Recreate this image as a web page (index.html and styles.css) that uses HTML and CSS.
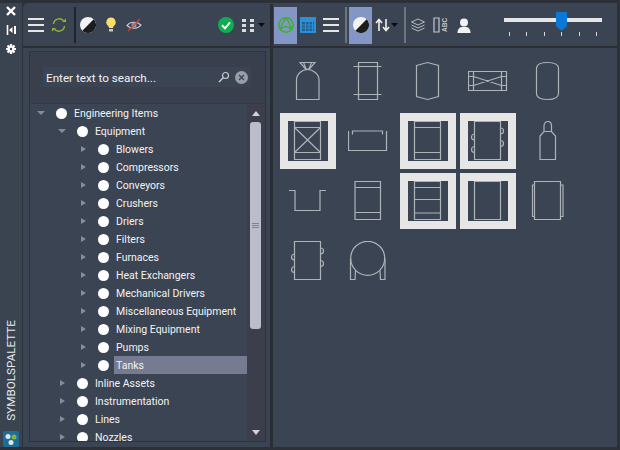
FILE: index.html
```html
<!DOCTYPE html>
<html lang="en">
<head>
<meta charset="utf-8">
<title>Symbolspalette</title>
<link rel="stylesheet" href="styles.css">
</head>
<body>
<div class="app">
  <aside class="strip">
    <svg class="strip-icon" width="14" height="14" viewBox="0 0 14 14"><path d="M3 3l8 8M11 3l-8 8" stroke="#fff" stroke-width="2.4" fill="none"/></svg>
    <svg class="strip-icon" width="14" height="14" viewBox="0 0 14 14"><path d="M3.500 2v10" stroke="#fff" stroke-width="1.600"/><path d="M5 7l3.500-3v6zM10 3h2v8h-2z" fill="#fff"/></svg>
    <svg class="strip-icon" width="14" height="14" viewBox="0 0 14 14"><path d="M7 2v10M2 7h10M3.500 3.500l7 7M10.500 3.500l-7 7" stroke="#fff" stroke-width="2.200"/><circle cx="7" cy="7" r="3.500" fill="#fff"/><circle cx="7" cy="7" r="1.200" fill="#3b4453"/></svg>
    <div class="strip-title">SYMBOLSPALETTE</div>
    <div class="strip-logo">
      <svg width="16" height="16" viewBox="0 0 16 16"><circle cx="5" cy="5.500" r="2.500" fill="#dfe6ea"/><circle cx="11" cy="6" r="2.500" fill="#7fb53a"/><circle cx="8" cy="11.500" r="2.500" fill="#dfe6ea"/></svg>
    </div>
  </aside>
  <main class="main">
    <header class="toolbar">
      <svg class="ml4" width="18" height="16" viewBox="0 0 18 16"><path d="M1 2h16M1 8h16M1 14h16" stroke="#e6e6e6" stroke-width="2"/></svg>
      <svg class="ml6" width="16" height="16" viewBox="0 0 16 16"><path d="M2.500 7A5.800 5.800 0 0 1 12.500 3.700M13.500 9A5.800 5.800 0 0 1 3.500 12.300" stroke="#8fb13a" stroke-width="1.500" fill="none"/><path d="M11 5h4V1.500zM5 11H1v3.500z" fill="#8fb13a"/></svg>
      <div class="sep ml7"></div>
      <svg class="ml4" width="16" height="16" viewBox="0 0 16 16"><circle cx="8" cy="8" r="8" fill="#f2f2f2"/><path d="M13.700 2.300A8 8 0 0 1 2.300 13.700z" fill="#1d1d1f"/></svg>
      <svg class="ml8" width="14" height="16" viewBox="0 0 14 16"><path d="M7 0.500a4.800 4.800 0 0 0-2.800 8.600c.6.600.8 1.200.8 2h4c0-.8.200-1.400.8-2A4.800 4.800 0 0 0 7 0.500z" fill="#f8df6a"/><path d="M5 12h4v2.500H5z" fill="#c9c9c9"/></svg>
      <svg class="ml8" width="16" height="14" viewBox="0 0 16 14"><path d="M1 7.500C4 3.500 11 3 15 7c-3 4-10 4.500-14 .5z" fill="none" stroke="#c9ccd2" stroke-width="1.200"/><path d="M5.500 7.300a2.500 2.500 0 0 1 5 0a2.500 2.500 0 0 1-5 0" fill="#8d99ad"/><path d="M2 13L14 1" stroke="#d8443a" stroke-width="1.300"/></svg>
      <svg class="ml76" width="16" height="16" viewBox="0 0 16 16"><circle cx="8" cy="8" r="8" fill="#0eae50"/><path d="M4 8.300l3 3 5-6" stroke="#fff" stroke-width="2" fill="none"/></svg>
      <svg class="ml7" width="14" height="14" viewBox="0 0 14 14"><path d="M1 1h4v3H1zM9 1h4v3H9zM1 6h4v3H1zM9 6h4v3H9zM1 11h4v3H1zM9 11h4v3H9z" fill="#dcdcdc"/></svg>
      <svg class="ml3" width="7" height="4" viewBox="0 0 7 4"><path d="M0 0h7L3.500 4z" fill="#0d0d0d"/></svg>
      <div class="sep-thick ml5"></div>
      <div class="active ml1">
        <svg width="16" height="16" viewBox="0 0 16 16"><circle cx="8" cy="8" r="7.200" fill="none" stroke="#3fae2a" stroke-width="1.500"/><path d="M2.500 12.500Q4 5.500 8 1.500Q12 5.500 13.500 12.500M3 12Q8 7 13 12" fill="none" stroke="#3fae2a" stroke-width="1.200"/></svg>
      </div>
      <svg class="ml3" width="16" height="16" viewBox="0 0 16 16"><path d="M0 0h16v16H0z" fill="#2d8fd5"/><path d="M2 5h12v9H2z" fill="#1e5f96"/><path d="M5.500 5v9M9 5v9M12.500 5v9M2 8h12M2 11h12" stroke="#2d8fd5"/></svg>
      <svg class="ml6" width="18" height="16" viewBox="0 0 18 16"><path d="M1 2h16M1 8h16M1 14h16" stroke="#e6e6e6" stroke-width="2"/></svg>
      <div class="sep-light ml5"></div>
      <div class="active ml2">
        <svg width="16" height="16" viewBox="0 0 16 16"><circle cx="8" cy="8" r="8" fill="#f2f2f2"/><path d="M13.700 2.300A8 8 0 0 1 2.300 13.700z" fill="#1d1d1f"/></svg>
      </div>
      <svg class="ml3" width="15" height="14" viewBox="0 0 15 14"><path d="M4 13V2M1 5l3-3.500L7 5M11 1v11M8 9l3 3.500L14 9" stroke="#f2f2f2" stroke-width="1.600" fill="none"/></svg>
      <svg class="ml1" width="7" height="4" viewBox="0 0 7 4"><path d="M0 0h7L3.500 4z" fill="#0d0d0d"/></svg>
      <div class="sep-light ml6"></div>
      <svg class="ml4" width="16" height="14" viewBox="0 0 16 14"><path d="M8 1l6.500 3L8 7 1.500 4zM1.500 7L8 10l6.500-3M1.500 10L8 13l6.500-3" fill="none" stroke="#b9bcc2"/></svg>
      <svg class="ml7" width="16" height="16" viewBox="0 0 16 16"><path d="M1 1h5v14H1z" fill="none" stroke="#c4c6cb" stroke-width="1.200"/><text class="abc" x="-15" y="14" transform="rotate(-90)">ABC</text></svg>
      <svg class="ml7" width="16" height="15" viewBox="0 0 16 15"><circle cx="8" cy="4.500" r="4" fill="#f2f2f2"/><path d="M1.500 15c0-4 2-5.500 4-6h5c2 .5 4 2 4 6z" fill="#f2f2f2"/></svg>
      <div class="slider ml32">
        <div class="slider-track"></div>
        <svg class="slider-thumb" width="11" height="19" viewBox="0 0 11 19"><path d="M0 0h11v14l-5.500 5L0 14z" fill="#0a78d7"/></svg>
        <div class="slider-ticks"><i></i><i></i><i></i><i></i><i></i><i></i></div>
      </div>
    </header>
    <div class="content">
      <section class="left">
        <div class="panel">
          <div class="search-area">
            <div class="search">
              <span class="search-text">Enter text to search...</span>
              <svg width="12" height="12" viewBox="0 0 12 12"><circle cx="7.500" cy="4.500" r="3" fill="none" stroke="#c9ccd2" stroke-width="1.200"/><path d="M5 7l-4 4" stroke="#c9ccd2" stroke-width="1.500"/></svg>
              <svg class="search-clear" width="13" height="13" viewBox="0 0 13 13"><circle cx="6.500" cy="6.500" r="6.500" fill="#9a9da5"/><path d="M4 4l5 5M9 4l-5 5" stroke="#3b4453" stroke-width="1.300"/></svg>
            </div>
          </div>
          <div class="tree-wrap">
            <div class="tree">
              <div class="row lv0"><i class="arrow open"></i><i class="dot"></i><span class="label">Engineering Items</span></div>
              <div class="row lv1"><i class="arrow open"></i><i class="dot"></i><span class="label">Equipment</span></div>
              <div class="row lv2"><i class="arrow"></i><i class="dot"></i><span class="label">Blowers</span></div>
              <div class="row lv2"><i class="arrow"></i><i class="dot"></i><span class="label">Compressors</span></div>
              <div class="row lv2"><i class="arrow"></i><i class="dot"></i><span class="label">Conveyors</span></div>
              <div class="row lv2"><i class="arrow"></i><i class="dot"></i><span class="label">Crushers</span></div>
              <div class="row lv2"><i class="arrow"></i><i class="dot"></i><span class="label">Driers</span></div>
              <div class="row lv2"><i class="arrow"></i><i class="dot"></i><span class="label">Filters</span></div>
              <div class="row lv2"><i class="arrow"></i><i class="dot"></i><span class="label">Furnaces</span></div>
              <div class="row lv2"><i class="arrow"></i><i class="dot"></i><span class="label">Heat Exchangers</span></div>
              <div class="row lv2"><i class="arrow"></i><i class="dot"></i><span class="label">Mechanical Drivers</span></div>
              <div class="row lv2"><i class="arrow"></i><i class="dot"></i><span class="label">Miscellaneous Equipment</span></div>
              <div class="row lv2"><i class="arrow"></i><i class="dot"></i><span class="label">Mixing Equipment</span></div>
              <div class="row lv2"><i class="arrow"></i><i class="dot"></i><span class="label">Pumps</span></div>
              <div class="row lv2"><i class="arrow"></i><i class="dot"></i><span class="label selected">Tanks</span></div>
              <div class="row lv1"><i class="arrow"></i><i class="dot"></i><span class="label">Inline Assets</span></div>
              <div class="row lv1"><i class="arrow"></i><i class="dot"></i><span class="label">Instrumentation</span></div>
              <div class="row lv1"><i class="arrow"></i><i class="dot"></i><span class="label">Lines</span></div>
              <div class="row lv1"><i class="arrow"></i><i class="dot"></i><span class="label">Nozzles</span></div>
            </div>
            <div class="scrollbar">
              <div class="sb-btn"><i class="sb-up"></i></div>
              <div class="sb-track"><div class="sb-thumb"><i class="sb-grip"></i></div></div>
              <div class="sb-btn"><i class="sb-down"></i></div>
            </div>
          </div>
        </div>
      </section>
      <div class="divider"></div>
      <section class="symbols">
        <div class="cell"><svg class="sym" viewBox="0 0 40 40"><path d="M8.500 38.500V19C8.500 13 14 8.500 19.500 8.500S31 13 31 19V38.500zM12 1.500H27L21.500 8H17.500zM15.500 1.500L18 8M23.500 1.500L21 8"/></svg></div>
        <div class="cell"><svg class="sym" viewBox="0 0 40 40"><path d="M10.500 1.500H29.500V38.500H10.500zM5.500 5.500H33.500M5.500 33.500H33.500"/></svg></div>
        <div class="cell"><svg class="sym" viewBox="0 0 40 40"><path d="M8.500 4.500Q14 3 19.500 1.500Q25 3 30.500 4.500V35.500Q25 37 19.500 38.500Q14 37 8.500 35.500z"/></svg></div>
        <div class="cell"><svg class="sym" viewBox="0 0 40 40"><path d="M.5 10.500H38.500V29.500H.5zM5.500 10.500V29.500M33.500 10.500V29.500M.5 15.500H5.500M33.500 15.500H38.500M.5 24.500H5.500M33.500 24.500H38.500M5.500 15.500L33.500 24.500M5.500 24.500L33.500 15.500"/></svg></div>
        <div class="cell"><svg class="sym" viewBox="0 0 40 40"><path d="M8.500 7.500C8.500 3 14 1.500 19.500 1.500S30.500 3 30.500 7.500V32.500C30.500 37 25 38.500 19.500 38.500S8.500 37 8.500 32.500z"/></svg></div>

        <div class="cell picked"><svg class="sym" viewBox="0 0 40 40"><path d="M6.500 .5H32.500V38.500H6.500zM6.500 6.500H32.500M6.500 31.500H32.500M6.500 6.500L32.500 31.500M32.500 6.500L6.500 31.500"/></svg></div>
        <div class="cell"><svg class="sym" viewBox="0 0 40 40"><path d="M.5 10V29.500H38.500V10M4.500 13.500V10H34.500V13.500"/></svg></div>
        <div class="cell picked"><svg class="sym" viewBox="0 0 40 40"><path d="M6.500 .5H32.500V38.500H6.500zM6.500 6.500H32.500M6.500 31.500H32.500"/></svg></div>
        <div class="cell picked"><svg class="sym" viewBox="0 0 40 40"><path d="M6.500 .5H32.500V38.500H6.500zM32.500 7A3 3 0 1 1 32.500 13M32.500 19.500A3 3 0 1 1 32.500 25.500M6.500 13A3 3 0 0 0 6.500 19M6.500 25.500A3 3 0 0 0 6.500 31.500"/></svg></div>
        <div class="cell"><svg class="sym" viewBox="0 0 40 40"><path d="M12 38.500V15L16 10.500H23.500L27.500 15V38.500zM16 10.500V5C16 2 18 .5 19.800 .5S23.500 2 23.500 5V10.500"/></svg></div>

        <div class="cell"><svg class="sym" viewBox="0 0 40 40"><path d="M1 9.500H7V29.500H32V9.500H38"/></svg></div>
        <div class="cell"><svg class="sym" viewBox="0 0 40 40"><path d="M7 .5H32.500V38.500H7zM7 6.500H32.500M7 31.500H32.500"/></svg></div>
        <div class="cell picked"><svg class="sym" viewBox="0 0 40 40"><path d="M6.500 .5H32.500V38.500H6.500zM6.500 6.500H32.500M6.500 18.500H32.500M6.500 32H32.500"/></svg></div>
        <div class="cell picked"><svg class="sym" viewBox="0 0 40 40"><path d="M6.500 .5H32.500V38.500H6.500z"/></svg></div>
        <div class="cell"><svg class="sym" viewBox="0 0 40 40"><path d="M6.500 .5H32.500V38.500H6.500zM6.500 4H4.500V35.500H6.500M32.500 4H35V35.500H32.500"/></svg></div>

        <div class="cell"><svg class="sym" viewBox="0 0 40 40"><path d="M6.500 .5H32.500V38.500H6.500zM32.500 7A3 3 0 1 1 32.500 13M32.500 19.500A3 3 0 1 1 32.500 25.500M6.500 13A3 3 0 0 0 6.500 19M6.500 25.500A3 3 0 0 0 6.500 31.500"/></svg></div>
        <div class="cell"><svg class="sym" viewBox="0 0 40 40"><circle cx="19.700" cy="17.300" r="17"/><path d="M2.500 17.500V38.500H7L7.500 29.500M37 17.500V38.500H32.500L32 29.500"/></svg></div>
      </section>
    </div>
  </main>
</div>
</body>
</html>
```
FILE: styles.css
```css
* { box-sizing: border-box; }
html, body { margin: 0; height: 100%; }
body {
  width: 620px;
  height: 450px;
  overflow: hidden;
  background: #2c3038;
  font-family: Roboto, "Open Sans", sans-serif;
  color: #f2f2f2;
}
.app { display: flex; height: 447px; padding-top: 3px; }

.strip {
  width: 22px;
  flex: none;
  margin-right: 1px;
  background: #3a4350;
  display: flex;
  flex-direction: column;
  align-items: center;
  padding-top: 1px;
}
.strip-icon { display: block; }
.strip-icon + .strip-icon { margin-top: 5px; }
.strip-title {
  margin-top: auto;
  writing-mode: vertical-rl;
  transform: rotate(180deg);
  font-size: 11.700px;
  line-height: 16px;
  color: #e9ebee;
}
.strip-logo {
  width: 16px;
  height: 16px;
  margin-top: 10px;
  background: #1c6e98;
  border-radius: 2px;
}
.strip-logo svg { display: block; }

.main {
  flex: 1;
  margin-right: 3px;
  min-width: 0;
  display: flex;
  flex-direction: column;
  background: #3b4453;
  border-top-left-radius: 5px;
}
.toolbar {
  height: 42px;
  margin-top: 1px;
  flex: none;
  display: flex;
  align-items: center;
}
.ml1 { margin-left: 1px; }
.ml2 { margin-left: 2px; }
.ml3 { margin-left: 3px; }
.ml4 { margin-left: 4px; }
.ml5 { margin-left: 5px; }
.ml6 { margin-left: 6px; }
.ml7 { margin-left: 7px; }
.ml8 { margin-left: 8px; }
.ml32 { margin-left: 32px; }
.ml76 { margin-left: 76px; }
.toolbar > svg { flex: none; display: block; }
.sep { width: 2px; height: 36px; background: #1f2329; }
.sep-light { width: 2px; height: 36px; background: #6d7480; }
.sep-thick { width: 3px; height: 42px; background: #2b2e34; }
.active {
  width: 23px;
  height: 37px;
  background: #8396c6;
  display: flex;
  align-items: center;
  justify-content: center;
}
.abc { font: 700 6.500px "Liberation Sans", sans-serif; fill: #c4c6cb; }

.slider {
  position: relative;
  width: 98px;
  height: 26px;
  flex: none;
  margin-top: 4px;
}
.slider-track {
  margin-top: 4px;
  height: 4px;
  background: #e6e6e6;
}
.slider-thumb { position: absolute; left: 52px; top: -2px; }
.slider-ticks {
  display: flex;
  justify-content: space-between;
  padding: 0 5px;
  margin-top: 10px;
}
.slider-ticks i { width: 1px; height: 4px; background: #d8d8d8; display: block; }

.content {
  flex: 1;
  min-height: 0;
  display: flex;
  border-top: 2px solid #2b2e34;
}
.left {
  width: 247px;
  flex: none;
  padding: 3px 4px 5px 6px;
}
.panel {
  height: 100%;
  border: 1px solid #2f333c;
  display: flex;
  flex-direction: column;
  background: #3a3f4d;
}
.search-area {
  height: 52px;
  flex: none;
  padding: 15px 14px 0 13px;
  border-bottom: 1px solid #363a45;
}
.search {
  height: 20px;
  display: flex;
  align-items: center;
  gap: 4px;
  background: #3b4453;
  padding: 0 3px;
}
.search-text {
  flex: 1;
  font-size: 11.700px;
  padding-top: 1px;
}
.search-clear { margin-left: 1px; }
.tree-wrap { flex: 1; min-height: 0; display: flex; background: #3b4453; }
.tree { flex: 1; min-width: 0; overflow: hidden; }
.row {
  height: 18px;
  display: flex;
  align-items: center;
  font-size: 10.500px;
}
.lv0 { padding-left: 7px; }
.lv1 { padding-left: 28px; }
.lv2 { padding-left: 49px; }
.arrow {
  width: 8px;
  height: 8px;
  flex: none;
  display: flex;
  align-items: center;
  justify-content: center;
}
.arrow::before {
  content: "";
  border-left: 5px solid #878c96;
  border-top: 3.500px solid transparent;
  border-bottom: 3.500px solid transparent;
}
.arrow.open::before {
  border-top: 4px solid #878c96;
  border-left: 4px solid transparent;
  border-right: 4px solid transparent;
  border-bottom: 0;
}
.dot {
  width: 11px;
  height: 11px;
  margin-left: 11px;
  flex: none;
  border-radius: 50%;
  background: #fff;
}
.label {
  flex: 1;
  height: 18px;
  line-height: 19px;
  margin-left: 5px;
  padding-left: 2px;
  white-space: nowrap;
}
.selected { background: #767b91; }

.scrollbar {
  width: 18px;
  flex: none;
  display: flex;
  flex-direction: column;
  background: #3c3e4b;
}
.sb-btn {
  height: 18px;
  flex: none;
  display: flex;
  align-items: center;
  justify-content: center;
}
.sb-up, .sb-down {
  border-left: 4px solid transparent;
  border-right: 4px solid transparent;
}
.sb-up { border-bottom: 5px solid #d0d2d8; }
.sb-down { border-top: 5px solid #d0d2d8; }
.sb-track { flex: 1; min-height: 0; padding: 0 4px 0 3px; }
.sb-thumb {
  height: 207px;
  background: #bcbdcc;
  border-radius: 3px;
  display: flex;
  align-items: center;
  justify-content: center;
}
.sb-grip {
  width: 7px;
  height: 5px;
  border-top: 1px solid #7f8090;
  border-bottom: 1px solid #7f8090;
  background: linear-gradient(#7f8090, #7f8090) center / 100% 1px no-repeat;
}

.divider { width: 3px; flex: none; margin-top: -2px; background: #2b2e34; }
.symbols {
  flex: 1;
  min-width: 0;
  padding: 5px 0 0 7px;
  display: grid;
  grid-template-columns: repeat(5, 56px);
  grid-auto-rows: 56px;
  gap: 4px;
  align-content: start;
}
.cell {
  display: flex;
  align-items: center;
  justify-content: center;
}
.picked { background: #e6e6e6; }
.sym {
  display: block;
  width: 40px;
  height: 40px;
  background: #3b4453;
  fill: none;
  stroke: #aeb2b9;
  stroke-width: 1.200;
}
```
